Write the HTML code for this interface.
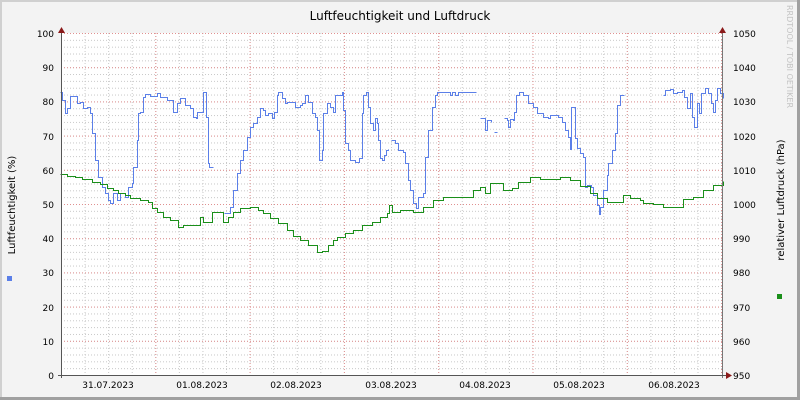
<!DOCTYPE html>
<html><head><meta charset="utf-8"><style>
html,body{margin:0;padding:0;background:#f3f3f3}
svg{display:block}
text{font-family:"DejaVu Sans","Liberation Sans",sans-serif}
</style></head><body>
<svg width="800" height="400" viewBox="0 0 800 400" xmlns="http://www.w3.org/2000/svg">
<defs>
<pattern id="hmin" x="61" y="33" width="3" height="6.84" patternUnits="userSpaceOnUse"><rect x="0" y="0" width="1" height="1" fill="#c8c8c8"/></pattern>
<pattern id="hmaj" x="61" y="33" width="3" height="34.2" patternUnits="userSpaceOnUse"><rect x="0" y="0" width="1" height="1" fill="#e09090"/></pattern>
<pattern id="vmin" x="61" y="33" width="23.575" height="3" patternUnits="userSpaceOnUse"><rect x="0" y="0" width="1" height="1" fill="#c8c8c8"/></pattern>
<pattern id="vmaj" x="61" y="33" width="94.3" height="3" patternUnits="userSpaceOnUse"><rect x="0" y="0" width="1" height="1" fill="#e09090"/></pattern>
</defs>
<rect x="0" y="0" width="800" height="400" fill="#f3f3f3"/>
<rect x="0" y="0" width="800" height="2" fill="#d0d0d0"/>
<rect x="0" y="0" width="2" height="400" fill="#d0d0d0"/>
<rect x="797" y="0" width="3" height="400" fill="#a0a0a0"/>
<rect x="0" y="397" width="800" height="3" fill="#a0a0a0"/>
<rect x="61" y="33" width="662" height="342" fill="#fff"/>
<rect x="61" y="33" width="662" height="342" fill="url(#hmin)"/>
<rect x="61" y="33" width="662" height="342" fill="url(#vmin)"/>
<rect x="61" y="33" width="662" height="342" fill="url(#hmaj)"/>
<rect x="61" y="33" width="662" height="342" fill="url(#vmaj)"/>

<g class="step" fill="none" stroke="#5b7fe8" stroke-width="1" transform="translate(0.5,0.5)" shape-rendering="crispEdges">
<polyline points="60,92 62,100 65,113 67,108 70,96 75,96 77,103 80,102 83,108 87,107 90,113 92,133 95,160 98,177 102,187 105,193 108,200 110,203 113,193 117,200 120,193 125,197 128,187 132,183 133,167 137,140 138,113 140,112 143,97 145,94 150,96 157,93 160,97 167,100 173,112 177,103 180,98 185,105 190,108 193,117 196,118 197,112 203,92 204,92 206,117 208,163 209,167 213,167"/>
<polyline points="224,213 227,213 230,207 233,190 237,173 240,160 243,150 247,137 250,127 253,123 257,117 260,108 263,110 265,115 268,113 272,118 274,112 277,95 278,92 282,98 285,103 287,102 293,102 295,107 300,105 302,103 305,95 308,102 312,113 315,117 317,130 319,160 322,150 323,113 327,103 330,107 333,112 335,95 342,92 343,110 345,143 348,150 350,160 355,162 359,158 362,113 363,95 366,92 368,107 370,123 373,130 375,118 377,123 378,140 380,158 382,160 384,155 386,150 388,149"/>
<polyline points="391,140 395,143 398,150 403,152 405,163 408,180 410,190 413,203 416,208 418,197 423,193 425,157 428,130 432,107 435,95 437,92 447,92 450,95 452,92 455,95 458,92 476,92"/>
<polyline points="480,118 483,118 485,130 487,120 491,122"/>
<polyline points="494,132 497,132"/>
<polyline points="504,118 507,120 508,127 510,119 513,120 514,112 516,95 519,92 523,95 528,103 533,107 537,113 543,117 548,118 550,115 558,117 562,122 565,130 568,137 570,149 571,107 573,107 575,138 577,148 580,153 583,157 585,187 587,185 591,187 593,195 597,205 599,214 600,207 603,190 607,175 608,163 612,150 615,133 617,105 620,95 624,95"/>
<polyline points="663,95 665,90 670,89 673,93 677,92 682,90 684,97 687,108 690,93 692,117 694,127 697,103 699,113 701,93 705,88 708,93 711,103 713,112 715,100 717,88 720,93 723,98"/>
</g>
<g class="step" fill="none" stroke="#1a8f1a" stroke-width="1" transform="translate(0.5,0.5)" shape-rendering="crispEdges">
<polyline points="60,174 67,176 75,177 82,179 92,182 100,184 107,188 113,190 118,193 125,195 130,198 140,200 148,202 152,208 157,212 163,217 170,220 178,227 183,225 197,225 200,217 203,222 212,212 223,212 223,222 228,217 233,212 240,208 250,207 258,210 263,213 270,218 278,223 287,230 293,236 300,240 308,245 317,252 322,251 328,245 333,240 337,237 345,233 353,230 362,225 372,222 380,217 387,213 389,205 392,212 400,210 413,212 423,207 433,200 443,197 463,197 473,190 480,187 485,193 490,183 500,183 503,190 505,190 512,188 518,182 530,177 540,179 553,179 560,177 570,180 580,186 590,193 597,198 607,202 617,202 623,195 630,198 640,200 643,203 653,204 663,207 673,207 683,199 693,197 703,190 713,185 723,181"/>
</g>

<line x1="61.5" y1="30" x2="61.5" y2="378" stroke="#555" stroke-width="1"/>
<line x1="722.5" y1="30" x2="722.5" y2="378" stroke="#777" stroke-width="1"/>
<line x1="58" y1="375.5" x2="726" y2="375.5" stroke="#555" stroke-width="1"/>
<polygon points="58,33 61.5,27 65,33" fill="#8b1a1a"/>
<polygon points="719,33 722.5,27 726,33" fill="#8b1a1a"/>
<polygon points="726,372 732,375.5 726,379" fill="#8b1a1a"/>

<text x="400" y="20" font-size="12" text-anchor="middle" fill="#000">Luftfeuchtigkeit und Luftdruck</text>
<g font-size="9" fill="#000" text-anchor="end">
<text x="54" y="37">100</text><text x="54" y="71">90</text><text x="54" y="105">80</text><text x="54" y="140">70</text><text x="54" y="174">60</text><text x="54" y="208">50</text><text x="54" y="242">40</text><text x="54" y="276">30</text><text x="54" y="311">20</text><text x="54" y="345">10</text><text x="54" y="379">0</text>
</g>
<g font-size="9" fill="#000">
<text x="733" y="37">1050</text><text x="733" y="71">1040</text><text x="733" y="105">1030</text><text x="733" y="140">1020</text><text x="733" y="174">1010</text><text x="733" y="208">1000</text><text x="733" y="242">990</text><text x="733" y="276">980</text><text x="733" y="311">970</text><text x="733" y="345">960</text><text x="733" y="379">950</text>
</g>
<g font-size="9" fill="#000" text-anchor="middle">
<text x="108" y="388">31.07.2023</text><text x="202" y="388">01.08.2023</text><text x="296" y="388">02.08.2023</text><text x="391" y="388">03.08.2023</text><text x="485" y="388">04.08.2023</text><text x="579" y="388">05.08.2023</text><text x="674" y="388">06.08.2023</text>
</g>
<text transform="translate(15,205) rotate(-90)" font-size="10" text-anchor="middle" fill="#000">Luftfeuchtigkeit (%)</text>
<text transform="translate(784,200) rotate(-90)" font-size="10" text-anchor="middle" fill="#000">relativer Luftdruck (hPa)</text>
<rect x="7" y="276" width="5" height="5" fill="#5b7fe8"/>
<rect x="777" y="294" width="5" height="5" fill="#1a8f1a"/>
<text transform="translate(787,5) rotate(90)" font-size="8" fill="#c4c4c4">RRDTOOL / TOBI OETIKER</text>
</svg>
<script>
document.querySelectorAll('g.step polyline').forEach(function(p){
  var pts=p.getAttribute('points').trim().split(/\s+/).map(function(s){return s.split(',').map(Number);});
  var out=[pts[0]];
  for(var i=1;i<pts.length;i++){out.push([pts[i][0],pts[i-1][1]]);out.push(pts[i]);}
  p.setAttribute('points',out.map(function(a){return a.join(',');}).join(' '));
});
</script>
</body></html>
